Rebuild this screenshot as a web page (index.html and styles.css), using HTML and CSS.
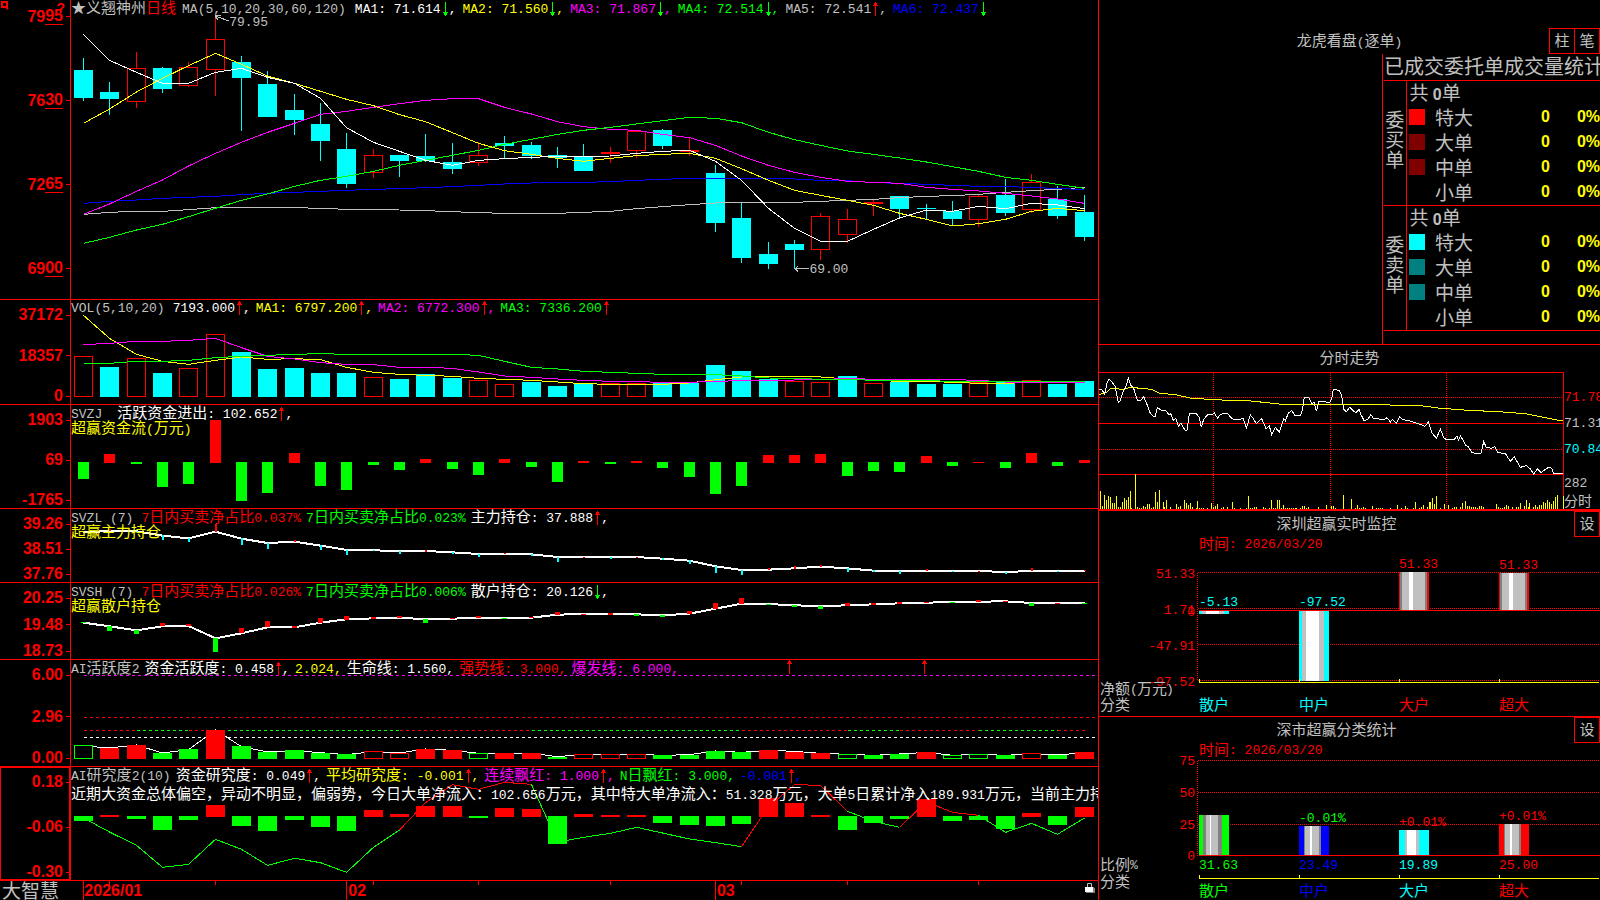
FILE: index.html
```html
<!DOCTYPE html>
<html lang="zh-CN">
<head>
<meta charset="utf-8">
<title>大智慧 - 义翘神州 日线</title>
<link rel="stylesheet" href="styles.css">
</head>
<body>
<svg class="defs" aria-hidden="true">
  <symbol id="up" viewBox="0 0 6 14"><path d="M3 0h1v14H3zM2 1h3v3H2zM1 3h5v1H1z"/></symbol>
  <symbol id="down" viewBox="0 0 6 14"><path d="M3 0h1v14H3zM2 10h3v3H2zM1 10h5v1H1z"/></symbol>
</svg>
<div class="app">
<main class="charts">
  <section class="row price">
    <div class="axis">
      <svg class="pin" viewBox="0 0 8 9"><path d="M1 1h5v5H1zM5 6l2 2" fill="none" stroke="#f00" stroke-width="2"/></svg>
      <span class="help">?</span>
      <span>79<u>95</u></span><span>76<u>30</u></span><span>72<u>65</u></span><span>69<u>00</u></span>
    </div>
    <div class="plot">
      <svg id="price" viewBox="0 0 3081 897" preserveAspectRatio="none"></svg>
      <div class="head">
        <div class="line"><span class="silver">★义翘神州<span class="red">日线</span></span><span class="silver n name">MA(5,10,20,30,60,120)</span>
          <span class="white n">MA1: 71.614<svg class="arrow green"><use href="#down"/></svg>,</span>
          <span class="yellow n">MA2: 71.560<svg class="arrow green"><use href="#down"/></svg>,</span>
          <span class="magenta n">MA3: 71.867<svg class="arrow green"><use href="#down"/></svg>,</span>
          <span class="green n">MA4: 72.514<svg class="arrow green"><use href="#down"/></svg>,</span>
          <span class="silver n">MA5: 72.541<svg class="arrow red"><use href="#up"/></svg>,</span>
          <span class="blue n">MA6: 72.437<svg class="arrow green"><use href="#down"/></svg></span></div>
      </div>
      <span class="mark high n">79.95</span>
      <span class="mark low n">69.00</span>
    </div>
  </section>

  <section class="row">
    <div class="axis"><span>37172</span><span>18357</span><span>0</span></div>
    <div class="plot">
      <svg id="volume" viewBox="0 15 3081 312" preserveAspectRatio="none"></svg>
      <div class="head">
        <div class="line latin"><span class="silver n name">VOL(5,10,20)</span>
          <span class="white n">7193.000<svg class="arrow red"><use href="#up"/></svg>,</span>
          <span class="yellow n">MA1: 6797.200<svg class="arrow red"><use href="#up"/></svg>,</span>
          <span class="magenta n">MA2: 6772.300<svg class="arrow red"><use href="#up"/></svg>,</span>
          <span class="green n">MA3: 7336.200<svg class="arrow red"><use href="#up"/></svg></span></div>
      </div>
    </div>
  </section>

  <section class="row">
    <div class="axis"><span>1903</span><span>69</span><span>-1765</span></div>
    <div class="plot">
      <svg id="flow" viewBox="0 330 3081 309" preserveAspectRatio="none"></svg>
      <div class="head">
        <div class="line"><span class="silver n name wide">SVZJ</span><span class="white">活跃资金进出<span class="n">: 102.652<svg class="arrow red"><use href="#up"/></svg>,</span></span></div>
        <div class="sub yellow">超赢资金流<span class="n">(</span>万元<span class="n">)</span></div>
      </div>
    </div>
  </section>

  <section class="row">
    <div class="axis"><span>39.26</span><span>38.51</span><span>37.76</span></div>
    <div class="plot">
      <svg id="main-hold" viewBox="0 642 3081 219" preserveAspectRatio="none"></svg>
      <div class="head">
        <div class="line"><span class="silver n name">SVZL (7)</span>
          <span class="red"><span class="n">7</span>日内买卖净占比<span class="n">0.037%</span></span>
          <span class="green"><span class="n">7</span>日内买卖净占比<span class="n">0.023%</span></span>
          <span class="white">主力持仓<span class="n">: 37.888<svg class="arrow red"><use href="#up"/></svg>,</span></span></div>
        <div class="sub yellow">超赢主力持仓</div>
      </div>
    </div>
  </section>

  <section class="row">
    <div class="axis"><span>20.25</span><span>19.48</span><span>18.73</span></div>
    <div class="plot">
      <svg id="retail-hold" viewBox="0 9 3081 228" preserveAspectRatio="none"></svg>
      <div class="head">
        <div class="line"><span class="silver n name">SVSH (7)</span>
          <span class="red"><span class="n">7</span>日内买卖净占比<span class="n">0.026%</span></span>
          <span class="green"><span class="n">7</span>日内买卖净占比<span class="n">0.006%</span></span>
          <span class="white">散户持仓<span class="n">: 20.126<svg class="arrow green"><use href="#down"/></svg>,</span></span></div>
        <div class="sub yellow">超赢散户持仓</div>
      </div>
    </div>
  </section>

  <section class="row">
    <div class="axis"><span>6.00</span><span>2.96</span><span>0.00</span></div>
    <div class="plot">
      <svg id="activity" viewBox="0 240 3081 318" preserveAspectRatio="none"></svg>
      <div class="head">
        <div class="line"><span class="silver"><span class="n">AI</span>活跃度<span class="n">2</span></span>
          <span class="white">资金活跃度<span class="n">: 0.458<svg class="arrow red"><use href="#up"/></svg>,</span></span>
          <span class="yellow n">2.024,</span>
          <span class="white">生命线<span class="n">: 1.560,</span></span>
          <span class="red">强势线<span class="n">: 3.000,</span></span>
          <span class="magenta">爆发线<span class="n">: 6.000,</span></span></div>
      </div>
      <svg class="arrow red signal first"><use href="#up"/></svg>
      <svg class="arrow red signal second"><use href="#up"/></svg>
    </div>
  </section>

  <section class="row">
    <div class="axis selected"><span>0.18</span><span>-0.06</span><span>-0.30</span></div>
    <div class="plot">
      <svg id="research" viewBox="0 561 3081 339" preserveAspectRatio="none"></svg>
      <div class="head">
        <div class="line"><span class="silver"><span class="n">AI</span>研究度<span class="n">2(10)</span></span>
          <span class="white">资金研究度<span class="n">: 0.049<svg class="arrow red"><use href="#up"/></svg>,</span></span>
          <span class="yellow">平均研究度<span class="n">: -0.001<svg class="arrow red"><use href="#up"/></svg>,</span></span>
          <span class="magenta">连续飘红<span class="n">: 1.000<svg class="arrow red"><use href="#up"/></svg>,</span></span>
          <span class="green"><span class="n">N</span>日飘红<span class="n">: 3.000,</span></span>
          <span class="blue n">-0.001<svg class="arrow red"><use href="#up"/></svg>,</span></div>
        <div class="comment white">近期大资金总体偏空，异动不明显，偏弱势，今日大单净流入：<span class="n">102.656</span>万元，其中特大单净流入：<span class="n">51.328</span>万元，大单<span class="n">5</span>日累计净入<span class="n">189.931</span>万元，当前主力持</div>
      </div>
    </div>
  </section>

  <footer class="row dates">
    <div class="brand">大智慧</div>
    <div class="plot">
      <svg id="dates" viewBox="0 903 3081 57" preserveAspectRatio="none"></svg>
      <span class="month jan">2026/01</span><span class="month feb">02</span><span class="month mar">03</span>
      <svg class="lock" viewBox="0 0 10 12"><path d="M2.500 5V1.500h4V5" fill="none" stroke="#c0c0c0"/><path d="M1 5h8v1h1v5H1z" fill="#808080"/><path d="M0 5h8v5H0z" fill="#fff"/></svg>
    </div>
  </footer>
</main>

<aside class="side">
  <section class="orders">
    <header class="bar"><h2>龙虎看盘<span class="n">(</span>逐单<span class="n">)</span></h2><button type="button">柱</button><button type="button">笔</button></header>
    <div class="book">
      <table>
        <caption><span>已成交委托单成交量统计</span></caption>
        <colgroup><col class="side-col"><col class="key-col"><col class="name-col"><col class="count-col"><col></colgroup>
        <tbody>
          <tr><th rowspan="5" scope="rowgroup"><span>委买单</span></th><td colspan="4" class="total">共 <b>0</b>单</td></tr>
          <tr><td><i class="swatch red-1"></i></td><td>特大</td><td class="num">0</td><td class="num">0%</td></tr>
          <tr><td><i class="swatch red-2"></i></td><td>大单</td><td class="num">0</td><td class="num">0%</td></tr>
          <tr><td><i class="swatch red-2"></i></td><td>中单</td><td class="num">0</td><td class="num">0%</td></tr>
          <tr><td></td><td>小单</td><td class="num">0</td><td class="num">0%</td></tr>
        </tbody>
        <tbody>
          <tr><th rowspan="5" scope="rowgroup"><span>委卖单</span></th><td colspan="4" class="total">共 <b>0</b>单</td></tr>
          <tr><td><i class="swatch cyan-1"></i></td><td>特大</td><td class="num">0</td><td class="num">0%</td></tr>
          <tr><td><i class="swatch cyan-2"></i></td><td>大单</td><td class="num">0</td><td class="num">0%</td></tr>
          <tr><td><i class="swatch cyan-2"></i></td><td>中单</td><td class="num">0</td><td class="num">0%</td></tr>
          <tr><td></td><td>小单</td><td class="num">0</td><td class="num">0%</td></tr>
        </tbody>
      </table>
    </div>
  </section>

  <section class="intraday">
    <header class="bar"><h2>分时走势</h2></header>
    <div class="trend">
      <svg id="trend" viewBox="12 96 1395 411"></svg>
      <ul class="levels n">
        <li class="red">71.78</li><li class="silver">71.31</li><li class="cyan">70.84</li>
        <li class="silver small gap">282</li><li class="silver small cjk">分时</li>
      </ul>
    </div>
  </section>

  <section class="monitor">
    <header class="bar"><h2>深圳超赢实时监控</h2><button type="button">设</button></header>
    <svg id="monitor" class="figure" viewBox="0 0 501 206"></svg>
  </section>

  <section class="stats">
    <header class="bar"><h2>深市超赢分类统计</h2><button type="button">设</button></header>
    <svg id="stats" class="figure" viewBox="0 0 501 183"></svg>
  </section>
</aside>
</div>
<script src="charts.js"></script>
</body>
</html>
```
FILE: styles.css
```css
* { box-sizing: border-box; }

body {
  margin: 0;
  background: #000;
  color: #c0c0c0;
  font-family: "Noto Sans CJK SC", sans-serif;
  font-size: 15px;
  line-height: 16px;
}

.defs { position: absolute; width: 0; height: 0; }

.n { font-family: "Liberation Mono", monospace; font-size: 13px; }

.red { color: #f00; }
.green { color: #0f0; }
.yellow { color: #ff0; }
.magenta { color: #f0f; }
.cyan { color: #0ff; }
.blue { color: #00f; }
.white { color: #fff; }
.silver { color: #c0c0c0; }

.app {
  display: grid;
  grid-template-columns: minmax(0, 1fr) 501px;
  height: 100vh;
  min-height: 900px;
  overflow: hidden;
}

/* Left: stacked indicator rows sharing one time axis */
.charts {
  display: grid;
  grid-template-rows: 299fr 105fr 104fr 74fr 77fr 107fr 114fr 20fr;
  border-right: 1px solid #f00;
  min-width: 0;
}

.row {
  display: grid;
  grid-template-columns: 71px minmax(0, 1fr);
  min-height: 0;
  border-top: 1px solid #f00;
}

.row.price { border-top: 0; }

.axis {
  position: relative;
  display: flex;
  flex-direction: column;
  justify-content: space-between;
  align-items: flex-end;
  padding-top: 7px;
  border-right: 1px solid #f00;
  color: #f00;
  font: bold 16px/16px "Liberation Sans", sans-serif;
}

.axis > span { display: flex; align-items: center; }

.axis > span::after {
  content: "";
  width: 4px;
  height: 1px;
  margin-left: 3px;
  background: #f00;
}

.axis u { text-decoration: none; border-bottom: 1px solid #f00; }

.price .axis { padding: 8px 0 22px; }

.axis.selected { box-shadow: inset 1px 1px #f00, inset -1px -1px #f00; }

.axis .pin { position: absolute; left: 1px; top: 1px; width: 8px; height: 9px; }
.axis > .help { position: absolute; right: 5px; top: 0; font-size: 14px; }
.axis > .help::after { display: none; }

.plot {
  display: grid;
  grid-template: minmax(0, 1fr) / minmax(0, 1fr);
  position: relative;
  min-height: 0;
  overflow: hidden;
}

.plot > svg:first-child, .head { grid-area: 1 / 1; }
.plot > svg:first-child { width: 100%; height: 100%; min-height: 0; }

.head { white-space: nowrap; overflow: hidden; z-index: 1; }
.line { display: flex; gap: 5px; align-items: baseline; height: 15px; line-height: 14px; }
.line .name { margin-right: 3px; }
.line .wide { margin-right: 10px; }
.line.latin { height: 17px; padding-top: 2px; }
.price .line { gap: 6px; }
.sub { line-height: 14px; }
.comment { line-height: 22px; }

.arrow { width: 6px; height: 14px; margin: 0 1px; fill: currentColor; vertical-align: -3px; }
.line .arrow { margin-top: -3px; }
.arrow.signal { position: absolute; top: 0; }
.signal.first { left: 69.5%; }
.signal.second { left: 82.7%; }

.mark { position: absolute; color: #c0c0c0; }
.mark.high { left: 15.4%; top: 15px; }
.mark.low { left: 71.9%; top: 87.5%; }

.dates .brand { font-size: 19px; line-height: 18px; padding-left: 2px; white-space: nowrap; }
.month { position: absolute; top: 2px; color: #f00; font: bold 16px/16px "Liberation Sans", sans-serif; }
.month.jan { left: 1.3%; }
.month.feb { left: 27%; }
.month.mar { left: 62.9%; }
.lock { position: absolute; right: 3px; top: 1px; width: 10px; height: 12px; }

svg .u { vector-effect: non-scaling-stroke; fill: none; shape-rendering: crispEdges; }
svg rect.solid { shape-rendering: crispEdges; }

/* Right: order statistics and capital monitors */
.side { display: flex; flex-direction: column; min-width: 0; overflow: hidden; }
.side > section { border-bottom: 1px solid #f00; }
.side > section:last-child { border-bottom: 0; }

.bar { display: flex; align-items: center; height: 26px; }

.bar h2 {
  flex: 1;
  margin: 0;
  text-align: center;
  font-size: 15px;
  font-weight: normal;
  line-height: 24px;
  height: 26px;
}

.bar button {
  width: 26px;
  height: 26px;
  margin: 0;
  padding: 0 0 2px;
  border: 1px solid #f00;
  background: #000;
  color: #c0c0c0;
  font: 15px/20px "Noto Sans CJK SC", sans-serif;
}

.bar button + button { margin-left: -1px; }

.orders { padding-top: 28px; height: 345px; }
.orders h2 { padding-left: 51px; }

.book {
  margin-left: 283px;
  height: 290px;
  padding-left: 1px;
  border-left: 1px solid #f00;
}

.book table {
  width: 100%;
  table-layout: fixed;
  border-collapse: collapse;
  font-size: 19px;
  line-height: 20px;
}

.book caption { height: 26px; font-size: 20px; line-height: 24px; white-space: nowrap; text-align: left; }
.book caption span { display: block; width: 0; }
.book tbody { border-top: 1px solid #f00; border-bottom: 1px solid #f00; }
.book tr { height: 25px; }
.book th { padding: 0; border-right: 1px solid #f00; font-weight: normal; }
.book th span { display: block; width: 20px; margin: auto; padding-bottom: 8px; }
.book td { height: 25px; padding: 0 0 2px 2px; white-space: nowrap; }
.side-col { width: 22px; }
.key-col { width: 27px; }
.name-col { width: 60px; }
.count-col { width: 57px; }
.book .total { padding-left: 3px; }
.book b, .book .num { font-family: "Liberation Sans", sans-serif; font-weight: bold; font-size: 16px; }
.book b { line-height: 16px; }
.book .num { text-align: right; color: #ff0; }
.swatch { display: block; width: 16px; height: 16px; }
.red-1 { background: #f00; }
.red-2 { background: #800000; }
.cyan-1 { background: #0ff; }
.cyan-2 { background: #008080; }

.intraday .bar { height: 27px; }
.intraday h2 { line-height: 22px; }
.trend { display: flex; height: 137px; }
.trend svg { flex: none; width: 465px; height: 137px; }
.levels { list-style: none; margin: 0; padding: 13px 0 0; line-height: 26px; white-space: nowrap; }
.levels .small { line-height: 17px; }
.levels .gap { margin-top: 12px; }
.levels .cjk { font-family: "Noto Sans CJK SC", sans-serif; font-size: 14px; }

.side > .intraday { border-bottom-width: 2px; }
.monitor { height: 206px; }
.stats { flex: 1; }
.monitor .bar, .stats .bar { margin-bottom: -26px; position: relative; }
.figure { display: block; width: 501px; }
.figure text { font: 15px "Noto Sans CJK SC", sans-serif; }
.figure .n { font: 13px "Liberation Mono", monospace; }
```
FILE: charts.js
```js
const NS = 'http://www.w3.org/2000/svg';
const RED = '#f00', GREEN = '#0f0', CYAN = '#0ff', YELLOW = '#ff0';
const MAGENTA = '#f0f', BLUE = '#00f', WHITE = '#fff', SILVER = '#c0c0c0', GREY = '#808080';

function add(svg, name, attrs, text) {
  const el = document.createElementNS(NS, name);
  for (const k in attrs) el.setAttribute(k, attrs[k]);
  if (text !== undefined) el.textContent = text;
  svg.appendChild(el);
  return el;
}
const get = id => document.getElementById(id);

// Drawing units: three per pixel. cx() is the centre of a trading day.
const cx = i => 3 * (12 + Math.round(26.33 * i)) + 1.5;
const stroke = (svg, d, color, width = 1, dash = 'none') =>
  add(svg, 'path', { d, class: 'u', stroke: color, 'stroke-width': width, 'stroke-dasharray': dash });
const fill = (svg, x, y, width, height, color) =>
  add(svg, 'rect', { x, y, width, height, fill: color, class: 'solid' });
const series = (svg, ys, color, width, from = 0) =>
  stroke(svg, 'M' + ys.map((y, i) => cx(i + from) + ' ' + y).join('L'), color, width);
const outline = (svg, i, top, bottom, color) =>
  stroke(svg, `M${cx(i) - 27} ${top + 1.5}h54V${bottom - 1.5}h-54z`, color);
const body = (svg, i, top, bottom, color) =>
  fill(svg, cx(i) - 28.5, top, 57, Math.max(3, bottom - top), color);

// Daily candles: kind, body top, body bottom, high, low
const candles = [
  ['c',210,294,174,303],['c',276,297,246,345],['r',204,306,156,324],['c',204,267,201,279],['r',201,258,186,262],
  ['r',117,210,48,288],['c',186,234,168,393],['c',252,351,213,351],['c',330,360,282,405],['c',372,423,309,483],
  ['c',447,552,399,564],['r',465,519,447,534],['c',465,483,465,531],['c',468,483,402,486],['c',486,507,429,522],
  ['r',465,489,427,498],['c',429,438,408,476],['c',435,468,426,477],['c',465,474,441,504],['c',468,513,432,513],
  ['d',456,462,441,489],['r',393,453,393,473],['c',390,438,387,447],['d',450,456,412,467],['c',519,669,495,696],
  ['c',654,774,608,789],['c',762,792,726,807],['c',732,750,720,806],['r',648,750,639,780],['r',657,705,627,729],
  ['d',606,612,598,648],['c',588,627,588,655],['c',624,627,612,658],['c',633,657,603,678],['r',588,660,583,681],
  ['c',585,639,537,648],['r',546,630,522,639],['c',597,648,558,657],['c',636,711,585,723]];
{
  const s = get('price');
  candles.forEach(([k, t, b, h, l], i) => {
    const x = cx(i);
    if (k === 'r') {
      stroke(s, `M${x} ${h}V${t}M${x} ${b}V${l}`, RED);
      outline(s, i, t, b, RED);
    } else {
      const color = k === 'c' ? CYAN : RED;
      stroke(s, `M${x} ${h}V${l}`, color);
      body(s, i, t, b, color);
    }
  });
  series(s, [643,637,634,634,629,623,623,623,623,625,628,629,630,632,635,638,640,640,640,637,634,626,620,614,609,607,607,607,604,601,598,593,589,587,583,577,572,568,562], SILVER);
  series(s, [610,604,600,595,592,589,584,580,577,574,571,568,566,563,560,556,552,549,548,547,545,541,538,535,535,535,535,537,541,542,548,550,553,556,559,560,562,566,568], BLUE);
  series(s, [643,612,574,540,498,460,427,397,370,343,334,322,311,301,296,296,322,342,365,380,388,391,403,413,436,468,496,517,532,544,547,550,562,568,573,580,588,597,610], MAGENTA);
  series(s, [730,712,690,673,650,625,601,582,559,541,529,514,496,481,466,451,433,418,403,391,382,372,362,352,355,368,397,419,436,453,463,474,486,500,514,532,541,553,565], GREEN);
  series(s, [370,327,276,235,197,160,193,228,250,274,298,317,344,365,398,430,452,463,475,484,475,467,463,460,475,506,541,571,586,601,616,640,658,678,671,658,634,625,632], YELLOW);
  series(s, [103,181,217,250,250,217,205,232,250,295,383,427,454,481,496,481,476,472,469,469,468,460,454,451,484,541,625,685,724,724,688,654,630,634,619,626,610,615,626], WHITE);
  stroke(s, 'M432 48L474 63M432 48l18 -3M432 48l9 12M2172 806h42M2172 806l10 -9M2172 806l10 9', SILVER);
}

// Volume
{
  const s = get('volume');
  const rising = new Set([0, 2, 4, 5, 11, 15, 16, 20, 21, 27, 28, 30, 34, 36]);
  const tops = [183,216,189,234,219,117,171,222,219,234,234,246,252,237,249,255,267,261,273,267,264,264,264,264,210,228,252,258,261,243,264,261,267,267,261,261,255,267,258];
  tops.forEach((t, i) => rising.has(i) ? outline(s, i, t, 306, RED) : body(s, i, t, 306, CYAN));
  series(s, [61,130,178,199,208,196,186,193,191,194,217,232,238,241,244,250,253,256,261,266,268,268,268,264,254,246,244,244,246,252,256,259,259,262,265,265,262,262,262], YELLOW);
  series(s, [149,145,139,139,136,130,158,184,192,203,208,209,217,217,220,231,243,247,252,256,259,260,262,262,259,257,257,255,254,250,253,253,253,254,256,261,261,262,262], MAGENTA);
  series(s, [205,205,199,199,196,188,184,181,178,176,178,178,178,178,178,181,199,217,222,229,232,235,238,240,239,243,249,250,253,253,256,257,257,259,259,259,260,260,260], GREEN);
}

// Active capital flow
[552,477,507,576,567,375,618,594,474,573,585,510,525,492,522,540,492,516,561,498,507,498,519,546,597,573,480,480,477,543,528,531,483,513,500,519,474,513,495]
  .forEach((v, i) => v < 501
    ? fill(get('flow'), cx(i) - 16.5, v, 33, 504 - v, RED)
    : fill(get('flow'), cx(i) - 16.5, 501, 33, v - 501, GREEN));

// Holding lines with daily change ticks: side, top, bottom
function holding(id, line, marks, width, down) {
  const s = get(id);
  series(s, line, WHITE, 2);
  marks.forEach(([k, a, b], i) => k && fill(s, cx(i) - width / 2, a, width, Math.max(3, b - a), k === 'r' ? RED : down));
}
holding('main-hold',
  [712,708,709,722,730,710,731,744,740,752,765,766,768,768,772,777,777,778,786,786,786,786,791,797,814,825,824,820,815,820,827,828,828,828,828,831,828,828,828],
  [[],['r',702,708],['c',708,712],['c',720,735],['c',730,741],['r',687,711],['c',730,750],['c',744,762],['r',735,741],['c',750,765],['c',765,780],['c',765,768],['c',768,777],['r',765,771],['c',771,777],['c',777,786],['r',773,777],['c',777,783],['c',786,801],['r',786,789],['c',786,792],['r',786,789],['c',789,795],['c',795,807],['c',813,834],['c',825,840],['r',820,825],['r',813,822],['r',810,816],['c',820,831],['c',825,831],['c',828,837],['r',822,828],['c',827,831],['r',827,831],['c',831,837],['r',819,828],['c',827,831],['r',825,828]],
  6, CYAN);
holding('retail-hold',
  [128,139,151,139,138,175,160,142,142,128,118,115,114,117,116,113,114,113,104,102,102,103,106,101,86,71,72,76,78,76,73,70,68,66,65,64,69,70,70],
  [['g',126,129],['g',139,153],['g',150,162],['r',129,139],['r',132,138],['g',174,216],['r',144,160],['r',123,142],['r',138,144],['r',114,128],['r',108,120],['r',111,117],['r',108,114],['g',117,129],['r',113,117],['r',108,114],['g',113,117],['r',110,114],['r',96,105],['r',102,105],['r',99,105],['g',102,108],['g',105,111],['r',93,102],['r',69,87],['r',54,72],['g',71,75],['g',75,81],['g',78,87],['r',69,78],['r',69,75],['r',66,72],['r',65,69],['g',66,69],['r',60,66],['r',63,66],['g',69,78],['r',69,72],['g',69,72]],
  15, GREEN);

// AI activity: lower case marks hollow bars
{
  const s = get('activity');
  const level = (y, color, a = 37.5, b = 3081) => stroke(s, `M${a} ${y}H${b}`, color, 1, '3 3');
  level(286.5, MAGENTA);
  level(412.5, RED);
  level(472.5, WHITE);
  [[0,2,RED],[2,4,GREEN],[4,5,RED],[5,12,GREEN],[12,17,RED],[17,25,GREEN],[25,29,RED],[29,31,GREEN],[31,34,RED],[34,37,GREEN],[37,38,RED]]
    .forEach(([a, b, color]) => level(451.5, color, cx(a), cx(b)));
  series(s, [498,504,495,519,509,450,500,516,512,518,524,515,519,507,511,520,520,520,530,523,523,523,526,524,513,517,511,514,520,523,526,522,517,526,523,526,521,525,518], WHITE);
  [['g',495],['R',504],['R',495],['G',519],['G',507],['R',450],['G',498],['G',516],['G',510],['G',519],['G',522],['r',513],['r',519],['R',507],['R',510],['g',519],['R',519],['R',519],['G',531],['r',522],['r',522],['r',522],['G',525],['G',525],['G',513],['G',516],['R',510],['R',516],['R',519],['g',522],['G',525],['G',522],['R',516],['g',525],['g',522],['G',525],['r',519],['G',525],['R',516]]
    .forEach(([k, top], i) => {
      const color = k.toLowerCase() === 'r' ? RED : GREEN;
      if (k === k.toLowerCase()) { fill(s, cx(i) - 27, top, 54, 537 - top, '#000'); outline(s, i, top, 537, color); }
      else body(s, i, top, 537, color);
    });
}

// AI research
{
  const s = get('research');
  series(s, [714,756,796,862,853,778,808,856,835,848,877,802,750], GREEN, 1, 0);
  series(s, [750,668,614,628,607,613], RED, 1, 12);
  series(s, [613,786,772,760,742,759,777,788,800], GREEN, 1, 17);
  series(s, [800,680,614,616,694], RED, 1, 25);
  series(s, [694,724,742], GREEN, 1, 29);
  series(s, [742,665,697,706], RED, 1, 31);
  series(s, [706,757,730,763,714], GREEN, 1, 34);
  [723,705,717,750,720,675,738,753,720,741,753,690,702,678,678,714,684,687,792,702,705,705,729,735,738,732,654,669,705,750,729,717,657,723,720,747,699,735,681]
    .forEach((v, i) => v < 708 ? body(s, i, v, 711, RED) : body(s, i, 708, v, GREEN));
}

// Date axis
[0, 10, 24].forEach(i => stroke(get('dates'), `M${cx(i)} 903V960`, RED));
[1, 5, 11, 15, 20, 25, 29, 34].forEach(i => stroke(get('dates'), `M${cx(i)} 903V915`, RED));

// Intraday trend
{
  const s = get('trend');
  stroke(s, 'M12 172.5H1404M12 328.5H1404M355.5 99V507M706.5 99V507M1054.5 99V507', RED, 1, '1 1');
  stroke(s, 'M12 97.5H1405.5V507M12 250.5H1404M12 403.5H1404', RED);
  const vol = [7,54,13,9,19,42,25,27,31,39,37,36,43,18,49,18,55,39,61,6,67,6,73,21,79,33,85,27,91,36,97,54,100,3,112,105,118,6,124,3,130,3,136,9,142,6,148,15,154,15,160,3,166,6,172,51,178,21,184,57,196,21,199,6,205,27,217,6,235,15,241,6,247,9,259,27,265,18,271,12,277,18,283,6,295,3,298,24,304,3,310,3,316,3,328,3,340,18,346,6,352,9,358,15,370,3,376,6,388,6,403,21,409,3,427,3,445,3,451,39,457,3,463,3,469,6,475,6,496,6,502,3,514,3,520,27,526,3,532,3,538,27,544,27,550,3,556,12,562,3,568,3,574,3,580,3,586,3,592,3,595,3,607,3,613,9,619,9,625,3,631,6,661,6,685,12,700,9,706,9,712,3,
    736,42,760,30,772,3,778,12,784,3,790,3,796,6,802,3,823,9,835,3,841,3,847,3,853,3,877,3,898,12,910,3,922,9,928,3,946,3,952,21,964,3,970,6,976,12,988,6,994,21,997,21,1003,33,1009,15,1015,39,1027,3,1039,15,1051,12,1063,3,1069,6,1075,6,1087,6,1093,18,1102,24,1108,9,1114,9,1120,6,1126,6,1132,6,1138,3,1144,9,1150,9,1156,6,1195,15,1201,6,1207,3,1213,3,1219,6,1225,12,1231,9,1243,6,1255,6,1261,6,1267,18,1279,9,1285,27,1291,6,1294,18,1306,6,1312,12,1318,6,1324,12,1330,12,1336,21,1342,18,1348,27,1354,21,1360,15,1366,24,1372,36,1378,42,1396,39];
  for (let k = 0; k < vol.length; k += 2) fill(s, vol[k] + 8, 507 - vol[k + 1], 3, vol[k + 1], YELLOW);
  stroke(s, 'M12 164L36 156 48 145 85 148 104 143 150 145 175 150 195 160 240 164 290 175 380 180 460 182 560 193 840 194 975 197 1030 204 1120 211 1210 215 1290 221 1340 231 1390 241 1404 241', YELLOW);
  stroke(s, 'M12 148L20 149 29 162 37 126 42 118 48 122 60 138 70 187 76 182 84 155 92 142 100 115 107 136 115 142 127 181 138 181 146 170 157 196 165 218 176 230 181 229 187 203 200 211 213 212 222 225 228 221 234 241 242 235 250 259 258 249 270 271 276 270 283 221 303 220 313 232 319 262 326 238 338 224 352 224 358 219 368 235 376 223 388 220 398 221 408 233 420 240 445 236 454 265 466 225 474 234 484 251 500 236 513 266 523 258 530 283 541 262 553 277 566 236 571 242 580 220 590 211 600 226 616 227 622 210 628 172 642 173 650 190 658 188 664 214 672 184 705 187 711 172 715 148 733 151 740 165 746 208 754 215 764 202 774 212 782 218 792 208 798 224 808 243 818 238 828 224 836 236 868 238 876 233 886 246 892 238 904 249 914 230 924 239 945 243 975 253 990 259 1000 246 1010 277 1024 295 1036 268 1048 296 1062 300 1078 298 1086 288 1090 300 1097 288 1112 316 1120 320 1130 337 1142 341 1158 340 1166 305 1174 322 1190 325 1200 320 1208 337 1232 342 1246 364 1258 350 1276 382 1295 377 1306 387 1316 402 1327 387 1338 398 1360 382 1370 385 1376 400 1404 400', WHITE);
}

// Capital monitors: one pixel per unit
const label = (s, x, y, t, color, end) => add(s, 'text', { x, y, fill: color, class: 'n', 'text-anchor': end ? 'end' : 'start' }, t);
const word = (s, x, y, t, color) => add(s, 'text', { x, y, fill: color }, t);
function frame(s, lines, zero) {
  stroke(s, lines.map(y => `M99 ${y}H501`).join('') + `M98.5 ${lines[0]}V${Math.max(zero, lines[lines.length - 1])}`, RED, 1, '1 1');
  stroke(s, `M100 ${zero}H501`, RED);
}
function baseline(s, base) {
  stroke(s, `M100.5 ${base - 4}V${base}H500M200.5 ${base}v-4M300.5 ${base}v-4M400.5 ${base}v-4`, YELLOW);
}
// Cylinder shading: pairs of start offset and colour across a 30px bar
function cylinder(s, x, top, bottom, bands) {
  bands.forEach(([a, color], k) => fill(s, x + a, top, (bands[k + 1] ? bands[k + 1][0] : 30) - a, bottom - top, color));
}
{
  const s = get('monitor');
  word(s, 100, 38, '时间', RED); label(s, 130, 37, ': 2026/03/20', RED);
  frame(s, [61.5, 97.5, 133.5, 169.5], 99.5);
  [['51.33', 67], ['1.71', 103], ['0', 105], ['-47.91', 139], ['-97.52', 175]].forEach(([t, y]) => label(s, 96, y, t, RED, true));
  const sell = [[0, CYAN], [3, SILVER], [7, WHITE], [20, SILVER], [25, CYAN]];
  const buy = [[0, RED], [1, GREY], [3, SILVER], [10, WHITE], [14, SILVER], [26, GREY], [28, RED]];
  cylinder(s, 100, 100, 103, sell);
  cylinder(s, 200, 100, 170, sell);
  cylinder(s, 300, 61, 99, buy);
  cylinder(s, 400, 62, 99, buy);
  baseline(s, 171.5);
  label(s, 100, 95, '-5.13', CYAN); label(s, 200, 95, '-97.52', CYAN);
  label(s, 300, 57, '51.33', RED); label(s, 400, 58, '51.33', RED);
  word(s, 1, 183, '净额', SILVER); label(s, 31, 182, '(', SILVER); word(s, 38, 183, '万元', SILVER); label(s, 67, 182, ')', SILVER);
  word(s, 1, 199, '分类', SILVER);
  [['散户', CYAN], ['中户', CYAN], ['大户', RED], ['超大', RED]].forEach(([t, color], k) => word(s, 100 + 100 * k, 199, t, color));
}
{
  const s = get('stats');
  word(s, 100, 38, '时间', RED); label(s, 130, 37, ': 2026/03/20', RED);
  frame(s, [43.5, 75.5, 107.5], 138.5);
  [['75', 48], ['50', 80], ['25', 112], ['0', 143]].forEach(([t, y]) => label(s, 96, y, t, RED, true));
  cylinder(s, 100, 98, 138, [[0, GREEN], [4, GREY], [7, SILVER], [11, WHITE], [12, SILVER], [19, GREY], [23, GREEN]]);
  cylinder(s, 200, 109, 138, [[0, BLUE], [5, GREY], [6, SILVER], [11, WHITE], [13, SILVER], [20, GREY], [22, BLUE]]);
  cylinder(s, 300, 113, 138, [[0, CYAN], [6, SILVER], [8, WHITE], [17, SILVER], [20, CYAN]]);
  cylinder(s, 400, 107, 138, [[0, RED], [5, GREY], [6, SILVER], [11, WHITE], [13, SILVER], [20, GREY], [22, RED]]);
  baseline(s, 161.5);
  label(s, 200, 105, '-0.01%', GREEN); label(s, 300, 109, '+0.01%', RED); label(s, 400, 103, '+0.01%', RED);
  [['31.63', '散户', GREEN], ['23.49', '中户', BLUE], ['19.89', '大户', CYAN], ['25.00', '超大', RED]].forEach(([v, t, color], k) => {
    label(s, 100 + 100 * k, 152, v, color);
    word(s, 100 + 100 * k, 179, t, color);
  });
  word(s, 1, 153, '比例', SILVER); label(s, 31, 152, '%', SILVER);
  word(s, 1, 170, '分类', SILVER);
}
```
